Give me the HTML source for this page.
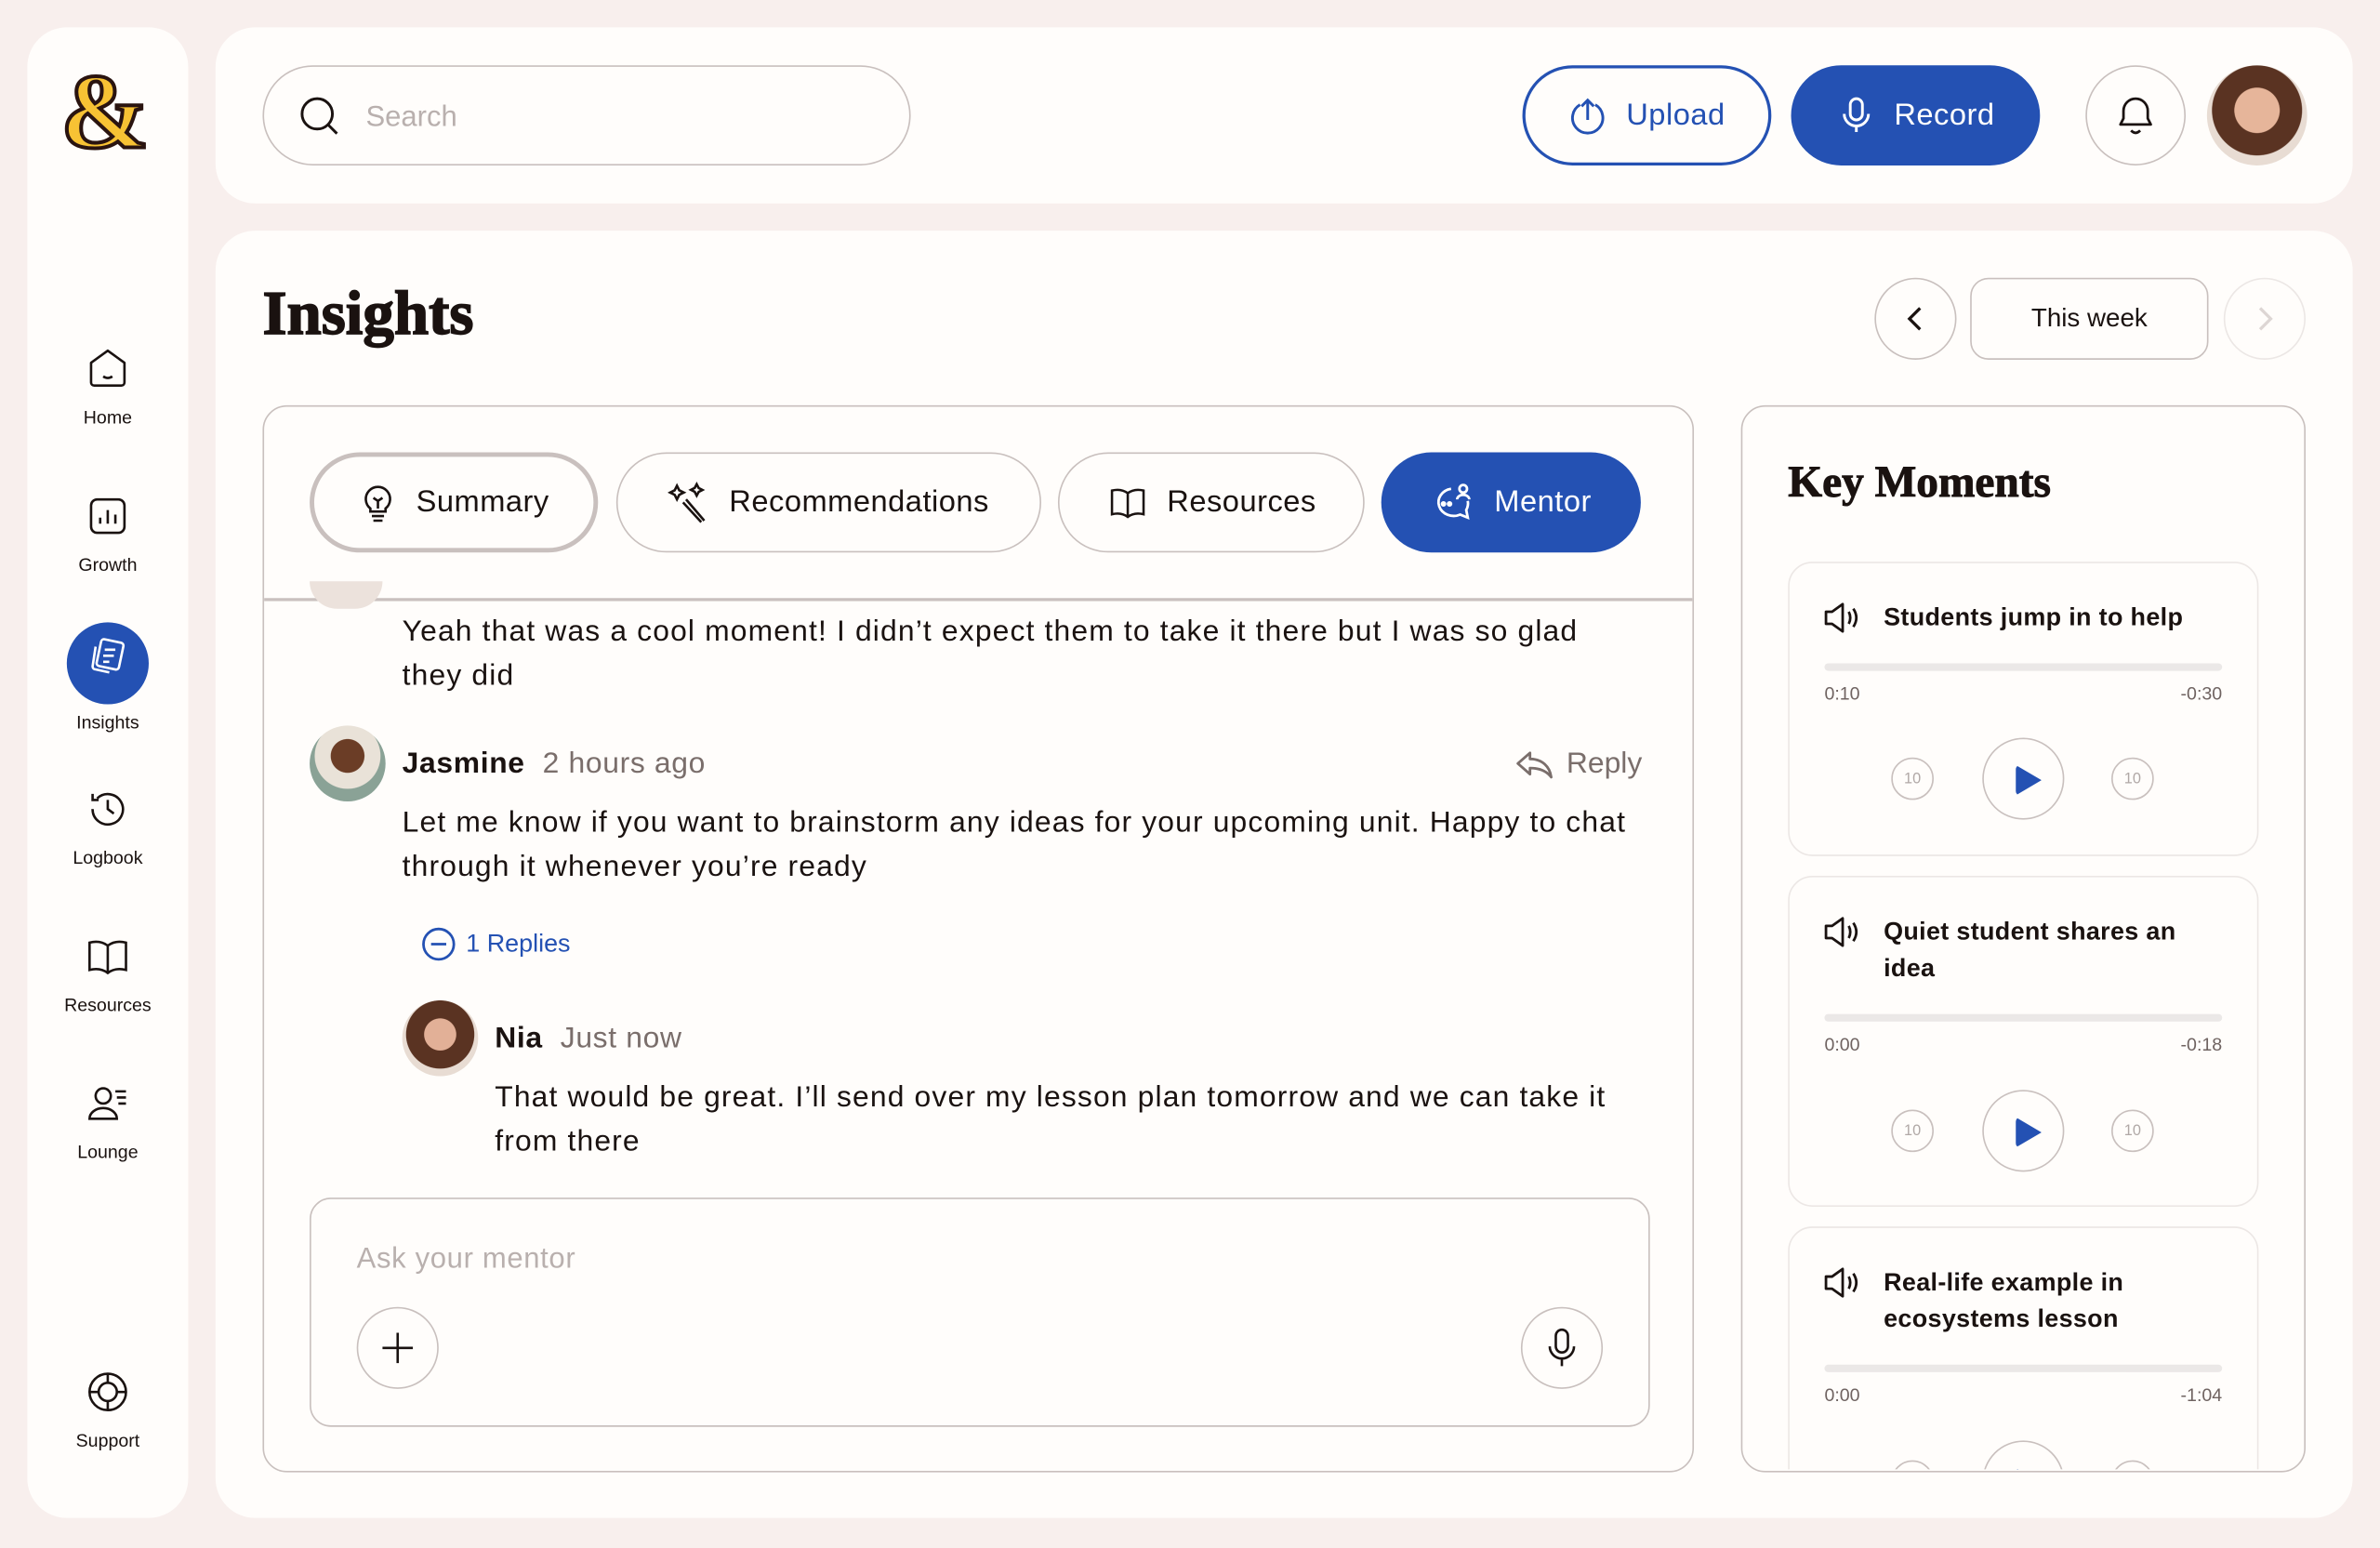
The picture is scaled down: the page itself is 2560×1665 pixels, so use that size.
<!DOCTYPE html>
<html><head><meta charset="utf-8"><style>
*{box-sizing:border-box;margin:0;padding:0}
html,body{width:2560px;height:1664px;overflow:hidden;background:#f8efed}
#w{position:absolute;left:0;top:0;width:1568px;height:1020px;transform:scale(1.63265);transform-origin:0 0;font-family:"Liberation Sans",sans-serif;color:#1a1210}
.a{position:absolute}
.card{background:#fffdfb;border-radius:26px}
.nav{position:absolute;left:0;width:106px;text-align:center;font-size:12px;color:#1a1210}
.nav svg{display:block;margin:0 auto 10px}
.pill{position:absolute;border:1.5px solid #c9c0be;border-radius:34px;display:flex;align-items:center;justify-content:center;font-size:20px;gap:12px;background:#fffdfb;letter-spacing:0.3px}
.km{position:absolute;left:1178px;width:310px;border:1.5px solid #ece7e5;border-radius:16px;background:#fffdfb}
.km h4{position:absolute;left:62px;font-size:16.5px;font-weight:bold;line-height:24px;letter-spacing:0.2px}
.bar{position:absolute;left:23px;right:23px;height:5px;border-radius:3px;background:#ebe8e7}
.t{position:absolute;font-size:12px;color:#6f6361}
.sk{position:absolute;width:28px;height:28px;border:1.5px solid #c9c0be;border-radius:50%;font-size:10px;color:#b0a8a6;display:flex;align-items:center;justify-content:center}
.pl{position:absolute;width:54px;height:54px;border:1.5px solid #c9c0be;border-radius:50%}
.pl:after{content:"";position:absolute;left:21px;top:17px;border-left:17px solid #2451b3;border-top:10px solid transparent;border-bottom:10px solid transparent;border-radius:3px}
.msg{font-size:19.5px;line-height:29px;color:#1a1210;letter-spacing:0.7px}
.serif{font-family:'Liberation Serif',serif;font-weight:900;-webkit-text-stroke:1px #1a1210}
</style></head><body><div id="w">
<!-- sidebar -->
<div class="a card" style="left:18px;top:18px;width:106px;height:982px">
 <div class="a" style="left:22px;top:22px;font-family:'Liberation Serif',serif;font-weight:bold;font-size:70px;color:#f7c234;-webkit-text-stroke:2.5px #2a1410;line-height:70px">&amp;</div>
 <div class="nav" style="top:210px"><svg width="30" height="30" viewBox="0 0 30 30" fill="none" stroke="#1a1210" stroke-width="1.6"><path d="M15 3 L26 11 V24 a2 2 0 0 1-2 2 H6 a2 2 0 0 1-2-2 V11Z" stroke-linejoin="round"/><path d="M12 20 q3 2 6 0"/></svg>Home</div>
 <div class="nav" style="top:307px"><svg width="30" height="30" viewBox="0 0 30 30" fill="none" stroke="#1a1210" stroke-width="1.6"><rect x="4" y="4" width="22" height="22" rx="4"/><path d="M10 20v-4M15 20v-9M20 20v-6"/></svg>Growth</div>
 <div class="nav" style="top:392px"><div style="width:54px;height:54px;border-radius:50%;background:#2451b3;margin:0 auto 5px;display:flex;align-items:center;justify-content:center"><svg width="30" height="30" viewBox="0 0 30 30" fill="none" stroke="#fff" stroke-width="1.6"><rect x="9" y="5" width="15" height="18" rx="2" transform="rotate(12 16 14)"/><path d="M7 9 L5 22 a2 2 0 0 0 2 2 l9 2"/><path d="M13 11h7M12 15h7M12 19h4"/></svg></div>Insights</div>
 <div class="nav" style="top:500px"><svg width="30" height="30" viewBox="0 0 30 30" fill="none" stroke="#1a1210" stroke-width="1.6"><path d="M5 15 a10 10 0 1 0 3-7"/><path d="M5 5v4h4"/><path d="M15 9v6l4 3"/></svg>Logbook</div>
 <div class="nav" style="top:597px"><svg width="30" height="30" viewBox="0 0 30 30" fill="none" stroke="#1a1210" stroke-width="1.6"><path d="M15 8 C11 5 7 5 3 6 V24 C7 23 11 23 15 26 C19 23 23 23 27 24 V6 C23 5 19 5 15 8Z M15 8V26"/></svg>Resources</div>
 <div class="nav" style="top:694px"><svg width="30" height="30" viewBox="0 0 30 30" fill="none" stroke="#1a1210" stroke-width="1.6"><circle cx="12" cy="10" r="5"/><path d="M3 25 a9 7 0 0 1 18 0Z"/><path d="M20 7h7M21 11h6M22 15h5"/></svg>Lounge</div>
 <div class="nav" style="top:884px"><svg width="30" height="30" viewBox="0 0 30 30" fill="none" stroke="#1a1210" stroke-width="1.6"><circle cx="15" cy="15" r="12"/><circle cx="15" cy="15" r="6"/><path d="M15 3v6M15 21v6M3 15h6M21 15h6"/></svg>Support</div>
</div>
<!-- header -->
<div class="a card" style="left:142px;top:18px;width:1408px;height:116px">
 <div class="a" style="left:31px;top:25px;width:427px;height:66px;border:1.5px solid #c9c0be;border-radius:33px">
  <svg class="a" style="left:22px;top:18px" width="30" height="30" viewBox="0 0 30 30" fill="none" stroke="#1a1210" stroke-width="1.8"><circle cx="13" cy="13" r="10"/><path d="M20 20l6 6"/></svg>
  <span class="a" style="left:67px;top:23px;font-size:19px;color:#b9b0ae">Search</span></div>
 <div class="pill" style="left:861px;top:25px;width:164px;height:66px;border:2px solid #2451b3;color:#2451b3;background:none"><svg width="26" height="26" viewBox="0 0 26 26" fill="none" stroke="#2451b3" stroke-width="1.8"><path d="M8 6 a10 10 0 1 0 10 0"/><path d="M13 16V3M9 7l4-4 4 4"/></svg>Upload</div>
 <div class="pill" style="left:1038px;top:25px;width:164px;height:66px;border:none;background:#2451b3;color:#fff"><svg width="26" height="26" viewBox="0 0 26 26" fill="none" stroke="#fff" stroke-width="1.8"><rect x="9" y="2" width="8" height="14" rx="4"/><path d="M5 12a8 8 0 0 0 16 0M13 20v4"/></svg>Record</div>
 <div class="a" style="left:1232px;top:25px;width:66px;height:66px;border:1.5px solid #c9c0be;border-radius:50%"><svg class="a" style="left:18px;top:17px" width="28" height="30" viewBox="0 0 28 30" fill="none" stroke="#1a1210" stroke-width="1.7"><path d="M4 21 h20 l-2-4 V12 a8 8 0 0 0-16 0 v5Z" stroke-linejoin="round"/><path d="M11 25 q3 3 6 0"/></svg></div>
 <div class="a" style="left:1312px;top:25px;width:66px;height:66px;border-radius:50%;background:radial-gradient(circle at 50% 45%,#e6b59a 0 30%,#5a3322 31% 60%,#e8dcd3 61%)"></div>
</div>
<!-- main -->
<div class="a card" style="left:142px;top:152px;width:1408px;height:848px">
 <div class="a serif" style="left:31px;top:30px;font-size:41px">Insights</div>
 <div class="a" style="left:1093px;top:31px;width:54px;height:54px;border:1.5px solid #c9c0be;border-radius:50%"><svg class="a" style="left:16px;top:16px" width="20" height="20" viewBox="0 0 20 20" fill="none" stroke="#1a1210" stroke-width="2"><path d="M13 3 L6 10 L13 17"/></svg></div>
 <div class="a" style="left:1156px;top:31px;width:157px;height:54px;border:1.5px solid #c9c0be;border-radius:12px;font-size:17px;text-align:center;line-height:52px">This week</div>
 <div class="a" style="left:1323px;top:31px;width:54px;height:54px;border:1.5px solid #ece7e5;border-radius:50%"><svg class="a" style="left:16px;top:16px" width="20" height="20" viewBox="0 0 20 20" fill="none" stroke="#ddd6d4" stroke-width="2"><path d="M7 3 L14 10 L7 17"/></svg></div>
</div>
<!-- chat panel -->
<div class="a" style="left:173px;top:267px;width:943px;height:703px;border:1.5px solid #c9c0be;border-radius:16px;background:#fffdfb;overflow:hidden">
 <div class="pill" style="left:30px;top:30px;width:190px;height:66px;border:3px solid #c9c0be"><svg width="26" height="28" viewBox="0 0 26 28" fill="none" stroke="#1a1210" stroke-width="1.6"><path d="M8 18 a8 8 0 1 1 10 0 v2 H8Z"/><path d="M9 23h8M10 26h6M13 18v-5M10 11l3 2 3-2"/></svg>Summary</div>
 <div class="pill" style="left:232px;top:30px;width:280px;height:66px"><svg width="28" height="28" viewBox="0 0 28 28" fill="none" stroke="#1a1210" stroke-width="1.6"><path d="M12 12 L24 26 M10 14 L22 27"/><path d="M6 3l1.5 3 3 1.5-3 1.5L6 12 4.5 9l-3-1.5 3-1.5Z M19 2l1.3 2.5 2.5 1.3-2.5 1.3L19 9.5 17.7 7l-2.5-1.3 2.5-1.3Z"/></svg>Recommendations</div>
 <div class="pill" style="left:523px;top:30px;width:202px;height:66px"><svg width="28" height="26" viewBox="0 0 30 30" fill="none" stroke="#1a1210" stroke-width="1.8"><path d="M15 8 C11 5 7 5 3 6 V24 C7 23 11 23 15 26 C19 23 23 23 27 24 V6 C23 5 19 5 15 8Z M15 8V26"/></svg>Resources</div>
 <div class="pill" style="left:736px;top:30px;width:171px;height:66px;border:none;background:#2451b3;color:#fff"><svg width="30" height="30" viewBox="0 0 30 30" fill="none" stroke="#fff" stroke-width="1.7"><path d="M14 6 a10 9 0 1 0 6 17 l5 2-1-5 a9 9 0 0 0 1-6"/><circle cx="22" cy="6" r="2.5"/><path d="M18 13 a4 3 0 0 1 8 0"/><circle cx="9" cy="16" r="1" fill="#fff"/><circle cx="13" cy="16" r="1" fill="#fff"/></svg>Mentor</div>
 <div class="a" style="left:0;right:0;top:126px;height:1.5px;background:#c9c0be"></div>
 <div class="a" style="left:30px;top:115px;width:48px;height:18px;border-radius:0 0 24px 24px;background:#ece2dc"></div>
 <div class="a msg" style="left:91px;top:134px;width:815px">Yeah that was a cool moment! I didn’t expect them to take it there but I was so glad they did</div>
 <div class="a" style="left:30px;top:210px;width:50px;height:50px;border-radius:50%;background:radial-gradient(circle at 50% 40%,#6b3d26 0 28%,#e9e2d8 29% 55%,#8aa296 56%)"></div>
 <div class="a" style="left:91px;top:224px;font-size:19.5px;letter-spacing:0.4px"><b>Jasmine</b>&nbsp;&nbsp;<span style="color:#7a6e6b">2 hours ago</span></div>
 <div class="a" style="left:824px;top:224px;font-size:19.5px;color:#7a6e6b;display:flex;gap:8px;align-items:center"><svg width="26" height="20" viewBox="0 0 26 20" fill="none" stroke="#7a6e6b" stroke-width="1.7"><path d="M10 2 L2 9 L10 16 V12 C16 12 21 14 24 18 C23 11 18 6 10 6Z" stroke-linejoin="round"/></svg>Reply</div>
 <div class="a msg" style="left:91px;top:260px;width:815px">Let me know if you want to brainstorm any ideas for your upcoming unit. Happy to chat through it whenever you’re ready</div>
 <div class="a" style="left:103px;top:342px;font-size:16.5px;color:#2451b3;display:flex;align-items:center;gap:6px"><svg width="24" height="24" viewBox="0 0 24 24" fill="none" stroke="#2451b3" stroke-width="1.7"><circle cx="12" cy="12" r="10"/><path d="M7 12h10"/></svg>1 Replies</div>
 <div class="a" style="left:91px;top:391px;width:50px;height:50px;border-radius:50%;background:radial-gradient(circle at 50% 45%,#e2b097 0 28%,#5a3322 29% 60%,#e8dcd3 61%)"></div>
 <div class="a" style="left:152px;top:405px;font-size:19.5px;letter-spacing:0.4px"><b>Nia</b>&nbsp;&nbsp;<span style="color:#7a6e6b">Just now</span></div>
 <div class="a msg" style="left:152px;top:441px;width:755px">That would be great. I’ll send over my lesson plan tomorrow and we can take it from there</div>
 <div class="a" style="left:30px;top:521px;width:883px;height:151px;border:1.5px solid #c9c0be;border-radius:14px">
  <span class="a" style="left:30px;top:29px;font-size:19px;color:#b9b0ae;letter-spacing:0.4px">Ask your mentor</span>
  <div class="a" style="left:30px;top:71px;width:54px;height:54px;border:1.5px solid #c9c0be;border-radius:50%"><svg class="a" style="left:14px;top:14px" width="24" height="24" viewBox="0 0 24 24" stroke="#1a1210" stroke-width="1.6"><path d="M12 2v20M2 12h20"/></svg></div>
  <div class="a" style="left:797px;top:71px;width:54px;height:54px;border:1.5px solid #c9c0be;border-radius:50%"><svg class="a" style="left:13px;top:12px" width="26" height="28" viewBox="0 0 26 28" fill="none" stroke="#1a1210" stroke-width="1.6"><rect x="9" y="2" width="8" height="15" rx="4"/><path d="M5 13a8 8 0 0 0 16 0M13 21v5"/></svg></div>
 </div>
</div>
<!-- key moments -->
<div class="a" style="left:1147px;top:267px;width:372px;height:703px;border:1.5px solid #c9c0be;border-radius:16px;background:#fffdfb;overflow:hidden">
 <div class="a serif" style="left:30px;top:34px;font-size:29px;-webkit-text-stroke:0.6px #1a1210">Key Moments</div>
</div>
<div style="position:absolute;left:0;top:0;width:1568px;height:968px;overflow:hidden">
<div class="km" style="top:370px;height:194px">
 <svg class="a" style="left:22px;top:24px" width="26" height="24" viewBox="0 0 26 24" fill="none" stroke="#1a1210" stroke-width="1.7"><path d="M2 8h4l7-5v18l-7-5H2Z" stroke-linejoin="round"/><path d="M17 8q2 4 0 8M20 6q4 6 0 12"/></svg>
 <h4 style="top:24px">Students jump in to help</h4>
 <div class="bar" style="top:66px"></div><span class="t" style="left:23px;top:79px">0:10</span><span class="t" style="right:23px;top:79px">-0:30</span>
 <div class="sk" style="left:67px;top:128px">10</div><div class="pl" style="left:127px;top:115px"></div><div class="sk" style="left:212px;top:128px">10</div>
</div>
<div class="km" style="top:577px;height:218px">
 <svg class="a" style="left:22px;top:24px" width="26" height="24" viewBox="0 0 26 24" fill="none" stroke="#1a1210" stroke-width="1.7"><path d="M2 8h4l7-5v18l-7-5H2Z" stroke-linejoin="round"/><path d="M17 8q2 4 0 8M20 6q4 6 0 12"/></svg>
 <h4 style="top:24px;width:220px">Quiet student shares an idea</h4>
 <div class="bar" style="top:90px"></div><span class="t" style="left:23px;top:103px">0:00</span><span class="t" style="right:23px;top:103px">-0:18</span>
 <div class="sk" style="left:67px;top:153px">10</div><div class="pl" style="left:127px;top:140px"></div><div class="sk" style="left:212px;top:153px">10</div>
</div>
<div class="km" style="top:808px;height:218px">
 <svg class="a" style="left:22px;top:24px" width="26" height="24" viewBox="0 0 26 24" fill="none" stroke="#1a1210" stroke-width="1.7"><path d="M2 8h4l7-5v18l-7-5H2Z" stroke-linejoin="round"/><path d="M17 8q2 4 0 8M20 6q4 6 0 12"/></svg>
 <h4 style="top:24px;width:220px">Real-life example in ecosystems lesson</h4>
 <div class="bar" style="top:90px"></div><span class="t" style="left:23px;top:103px">0:00</span><span class="t" style="right:23px;top:103px">-1:04</span>
 <div class="sk" style="left:67px;top:153px">10</div><div class="pl" style="left:127px;top:140px"></div><div class="sk" style="left:212px;top:153px">10</div>
</div>
</div>
</div></body></html>
